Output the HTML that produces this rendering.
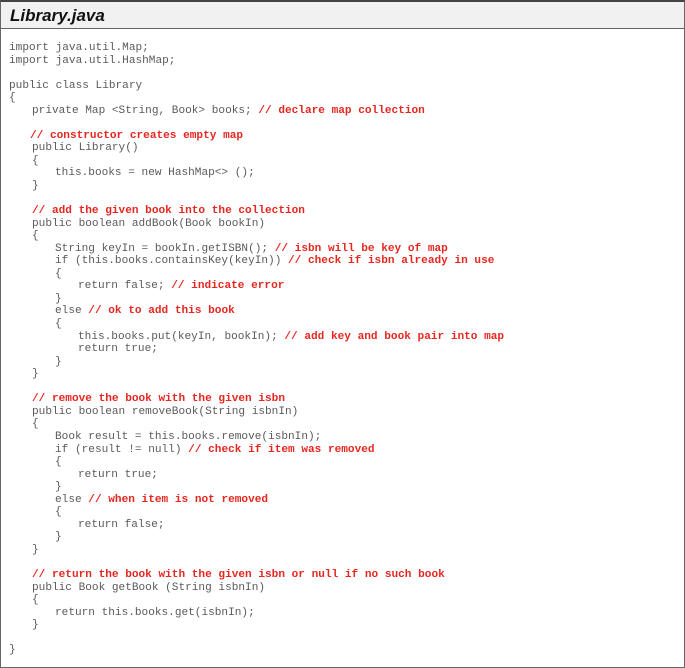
<!DOCTYPE html>
<html><head><style>
html,body{margin:0;padding:0;background:#fff;}
.box{position:absolute;left:0;top:0;width:683px;height:665px;border:1px solid #666;border-top:2px solid #444;}
.hd{height:26px;background:#f1f1f1;border-bottom:1px solid #666;font:bold italic 17px "Liberation Sans",sans-serif;color:#111;padding-left:9px;line-height:28px;}
.code{position:absolute;left:9px;top:42px;font:11.1px/12.55px "Liberation Mono",monospace;color:#5a5a5a;}
.code div{height:12.55px;white-space:pre;}
.c{color:#e8261f;font-weight:bold;}
.i1{padding-left:23px}.i2{padding-left:46px}.i3{padding-left:69px}
</style></head><body>
<div class="box"><div class="hd">Library.java</div></div>
<div class="code"><div>import java.util.Map;</div><div>import java.util.HashMap;</div><div></div><div>public class Library</div><div>{</div><div class="i1">private Map &lt;String, Book&gt; books; <span class="c">// declare map collection</span></div><div></div><div class="i1" style="padding-left:21px"><span class="c">// constructor creates empty map</span></div><div class="i1">public Library()</div><div class="i1">{</div><div class="i2">this.books = new HashMap&lt;&gt; ();</div><div class="i1">}</div><div></div><div class="i1"><span class="c">// add the given book into the collection</span></div><div class="i1">public boolean addBook(Book bookIn)</div><div class="i1">{</div><div class="i2">String keyIn = bookIn.getISBN(); <span class="c">// isbn will be key of map</span></div><div class="i2">if (this.books.containsKey(keyIn)) <span class="c">// check if isbn already in use</span></div><div class="i2">{</div><div class="i3">return false; <span class="c">// indicate error</span></div><div class="i2">}</div><div class="i2">else <span class="c">// ok to add this book</span></div><div class="i2">{</div><div class="i3">this.books.put(keyIn, bookIn); <span class="c">// add key and book pair into map</span></div><div class="i3">return true;</div><div class="i2">}</div><div class="i1">}</div><div></div><div class="i1"><span class="c">// remove the book with the given isbn</span></div><div class="i1">public boolean removeBook(String isbnIn)</div><div class="i1">{</div><div class="i2">Book result = this.books.remove(isbnIn);</div><div class="i2">if (result != null) <span class="c">// check if item was removed</span></div><div class="i2">{</div><div class="i3">return true;</div><div class="i2">}</div><div class="i2">else <span class="c">// when item is not removed</span></div><div class="i2">{</div><div class="i3">return false;</div><div class="i2">}</div><div class="i1">}</div><div></div><div class="i1"><span class="c">// return the book with the given isbn or null if no such book</span></div><div class="i1">public Book getBook (String isbnIn)</div><div class="i1">{</div><div class="i2">return this.books.get(isbnIn);</div><div class="i1">}</div><div></div><div>}</div></div>
</body></html>
